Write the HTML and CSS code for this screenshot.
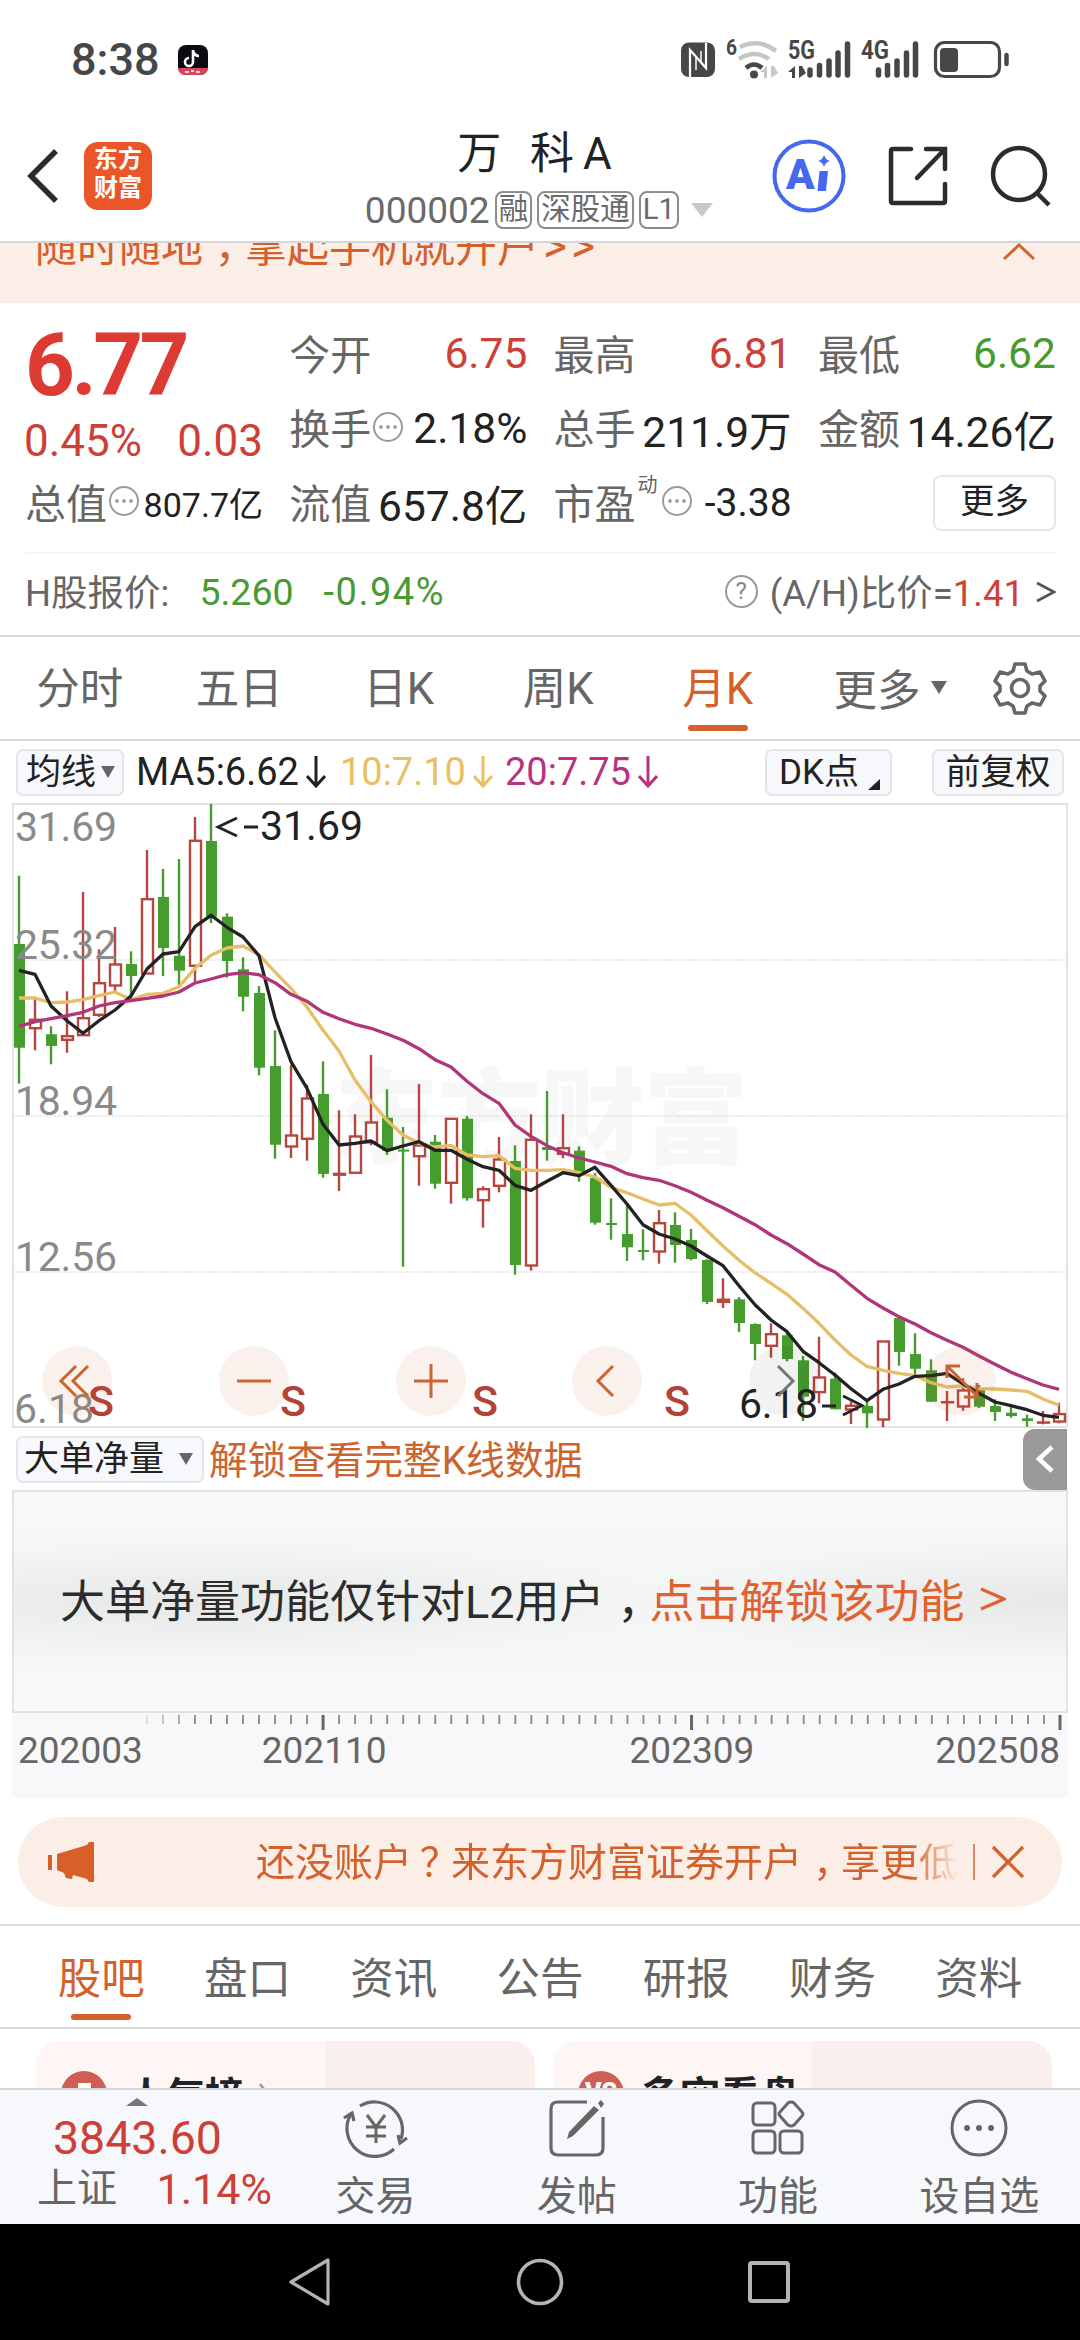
FILE: index.html
```html
<!DOCTYPE html>
<html lang="zh-CN">
<head>
    <meta charset="utf-8">
    <meta name="viewport" content="width=1080">
    <title>万科A 000002</title>
    <link rel="stylesheet" href="styles.css">
</head>
<body>
    <div class="statusbar">
        <span class="clock">8:38</span>
        <svg class="app-badge" width="32" height="32" viewBox="0 0 32 32">
            <rect x="1" y="1" width="30" height="30" rx="8" fill="#0b0b14"/>
            <path d="M1 24h30c0 4-3 7-8 7H9c-5 0-8-3-8-7z" fill="#d8455c"/>
            <path d="M16 6v12a4 4 0 1 1-4-4M16 7c1 3 3 5 6 5" fill="none" stroke="#fff" stroke-width="2.6"/>
            <path d="M8 28h4M14 27h3M19 28h4" stroke="#fbd9dc" stroke-width="2"/>
        </svg>
        <svg class="status-icons" width="332" height="42" viewBox="0 0 332 42">
            <rect x="4" y="3.500" width="34" height="34.500" rx="8" fill="#474747"/>
            <path d="M13 38V11l16 18V4" fill="none" stroke="#fff" stroke-width="2.200"/>
            <path d="M19 31V18M24 12v12" fill="none" stroke="#fff" stroke-width="1.500"/>
            <text x="49" y="16" class="net" font-size="22" textLength="11" lengthAdjust="spacingAndGlyphs">6</text>
            <g fill="none" stroke-width="4.500">
                <path d="M63 8q19-9 36 4" stroke="#c6c6c6"/>
                <path d="M62 20q16-10 30 0" stroke="#c6c6c6"/>
                <path d="M69 29q8-7 16 0" stroke="#474747"/>
            </g>
            <circle cx="77" cy="35.500" r="4" fill="#474747"/>
            <path d="M83 33l7-6v12h-3v-6zM94 39V27h3l4 7z" fill="#c6c6c6"/>
            <text x="111" y="20" class="net" font-size="26" textLength="27" lengthAdjust="spacingAndGlyphs">5G</text>
            <path d="M111 33l7-6v12h-3v-6zM122 39V27h3l4 7z" fill="#474747"/>
            <g stroke="#474747" stroke-width="5.500" stroke-linecap="round">
                <path d="M133 36v-5M142.500 36v-9.500M152 36V22M161 36V14M170.500 36V5"/>
                <path d="M201.500 36v-5M210.500 36v-9.500M220 36V22M229.500 36V14M238.500 36V5"/>
            </g>
            <text x="184" y="20" class="net" font-size="26" textLength="28" lengthAdjust="spacingAndGlyphs">4G</text>
            <rect x="258.500" y="3.500" width="64" height="34" rx="9" fill="none" stroke="#474747" stroke-width="3.200"/>
            <rect x="263" y="9" width="18" height="24" rx="4" fill="#474747"/>
            <path d="M329.500 16v9" stroke="#474747" stroke-width="4.500" stroke-linecap="round"/>
        </svg>
    </div>

    <div class="header">
        <div class="header-left">
            <svg width="34" height="56" viewBox="0 0 34 56"><path d="M30 3L5 28l25 25" fill="none" stroke="#2c2c2c" stroke-width="5.500"/></svg>
            <div class="logo">东方<br>财富</div>
        </div>
        <div class="header-title">
            <div class="name">万 科A</div>
            <div class="code">
                <span class="num">000002</span>
                <span class="tag">融</span>
                <span class="tag">深股通</span>
                <span class="tag">L1</span>
                <svg width="22" height="14" viewBox="0 0 22 14"><path d="M0 0h22L11 14z" fill="#c8c8c8"/></svg>
            </div>
        </div>
        <div class="header-right">
            <svg width="74" height="74" viewBox="0 0 74 74">
                <circle cx="37" cy="37" r="34.500" fill="none" stroke="#4468ee" stroke-width="4"/>
                <text x="14" y="50" class="ai">A</text>
                <path d="M47.500 32h8.500l-2 20h-8.500z" fill="#4468ee"/>
                <path d="M52 16q1.500 5 6 6-4.500 1-6 6-1.500-5-6-6 4.500-1 6-6z" fill="#4468ee"/>
            </svg>
            <svg width="60" height="60" viewBox="0 0 60 60">
                <path d="M23 3H5q-2 0-2 2v50q0 2 2 2h50q2 0 2-2V38M38 3h19v20M56 4L29 32" fill="none" stroke="#2c2c2c" stroke-width="4.500" stroke-linecap="round"/>
            </svg>
            <svg width="62" height="62" viewBox="0 0 62 62">
                <circle cx="29" cy="29" r="26" fill="none" stroke="#2c2c2c" stroke-width="4.500"/>
                <path d="M47 48l12 12" stroke="#2c2c2c" stroke-width="4.500"/>
            </svg>
        </div>
    </div>

    <div class="notice">
        <span class="notice-text">随时随地<i class="comma">，</i>拿起手机就开户<em>&gt;&gt;</em></span>
        <svg width="34" height="18" viewBox="0 0 34 18"><path d="M2 16L17 2l15 14" fill="none" stroke="#d4602c" stroke-width="3"/></svg>
    </div>

    <div class="quote">
        <div class="quote-grid">
            <div class="price">
                <div class="last">6.77</div>
                <div class="change"><span>0.45%</span><span>0.03</span></div>
            </div>
            <div class="cell"><span>今开</span><b class="up">6.75</b></div>
            <div class="cell"><span>最高</span><b class="up">6.81</b></div>
            <div class="cell"><span>最低</span><b class="down">6.62</b></div>
            <div class="cell"><span>换手</span><i class="dots"></i><b>2.18%</b></div>
            <div class="cell"><span>总手</span><b>211.9万</b></div>
            <div class="cell"><span>金额</span><b>14.26亿</b></div>
            <div class="cell"><span>总值</span><i class="dots"></i><b class="small">807.7亿</b></div>
            <div class="cell"><span>流值</span><b>657.8亿</b></div>
            <div class="cell"><span>市盈</span><sup>动</sup><i class="dots"></i><b class="mid">-3.38</b></div>
            <div class="cell"><button class="more">更多</button></div>
        </div>
        <div class="hshare">
            <span>H股报价:</span>
            <span class="down h-price">5.260</span>
            <span class="down h-rate">-0.94%</span>
            <span class="help">?</span>
            <span class="ratio">(A/H)比价=<em class="up">1.41</em></span>
            <svg width="20" height="22" viewBox="0 0 20 22"><path d="M1 2l17 9-17 9" fill="none" stroke="#555" stroke-width="2.600"/></svg>
        </div>
    </div>

    <div class="periods">
        <div class="period">分时</div>
        <div class="period">五日</div>
        <div class="period">日K</div>
        <div class="period">周K</div>
        <div class="period active">月K</div>
        <div class="period-more">更多<svg width="16" height="13" viewBox="0 0 16 13"><path d="M0 0h16L8 13z" fill="#666"/></svg></div>
        <svg class="gear" width="54" height="54" viewBox="0 0 54 54">
            <path d="M22 3h10l2 7 5 3 8-2 5 9-5 5v5l5 5-5 9-8-2-5 3-2 7H22l-2-7-5-3-8 2-5-9 5-5v-5l-5-5 5-9 8 2 5-3z" fill="none" stroke="#666" stroke-width="3.600" stroke-linejoin="round"/>
            <circle cx="27" cy="27" r="8.500" fill="none" stroke="#666" stroke-width="3.600"/>
        </svg>
    </div>

    <div class="indicators">
        <div class="chip chip-ma">均线<svg width="14" height="12" viewBox="0 0 14 12"><path d="M0 0h14L7 12z" fill="#666"/></svg></div>
        <span class="ma ma5">MA5:6.62<svg width="20" height="32" viewBox="0 0 20 32"><path d="M10 0v30M1 20l9 10 9-10" fill="none" stroke="currentColor" stroke-width="3"/></svg></span>
        <span class="ma ma10">10:7.10<svg width="20" height="32" viewBox="0 0 20 32"><path d="M10 0v30M1 20l9 10 9-10" fill="none" stroke="currentColor" stroke-width="3"/></svg></span>
        <span class="ma ma20">20:7.75<svg width="20" height="32" viewBox="0 0 20 32"><path d="M10 0v30M1 20l9 10 9-10" fill="none" stroke="currentColor" stroke-width="3"/></svg></span>
        <div class="chip chip-dk">DK点<svg width="12" height="11" viewBox="0 0 12 11"><path d="M12 0v11H0z" fill="#222"/></svg></div>
        <div class="chip chip-fq">前复权</div>
    </div>

    <div class="chart">
        <svg id="kline" width="1056" height="625" viewBox="12 803 1056 625">
            <text class="watermark" x="334" y="1156" textLength="414">东方财富</text>
            <path class="grid" d="M13 960H1067M13 1116H1067M13 1272H1067"/>
            <path class="frame" d="M13 804H1067V1427H13z"/>
            <g id="candles"></g>
            <g id="averages"></g>
            <g class="scale">
                <text x="15" y="841" textLength="102">31.69</text>
                <text x="15" y="959" textLength="102">25.32</text>
                <text x="15" y="1115" textLength="102">18.94</text>
                <text x="15" y="1271" textLength="102">12.56</text>
                <text x="14" y="1423" textLength="80">6.18</text>
            </g>
            <g class="mark">
                <text x="260" y="840" textLength="103">31.69</text>
                <path d="M237 818l-19 9 19 9M244 827h14"/>
                <text x="739" y="1418" textLength="79">6.18</text>
                <path d="M822 1406h14M843 1396l19 9.500-19 9.500"/>
            </g>
            <g class="sell">
                <text x="88" y="1416">S</text>
                <text x="280" y="1416">S</text>
                <text x="472" y="1416">S</text>
                <text x="664" y="1416">S</text>
            </g>
        </svg>
        <div class="tools">
            <div class="tool"><svg viewBox="0 0 70 70"><path d="M34 20L19 35l15 15M46 20L31 35l15 15"/></svg></div>
            <div class="tool"><svg viewBox="0 0 70 70"><path d="M18 35h34"/></svg></div>
            <div class="tool"><svg viewBox="0 0 70 70"><path d="M18 35h34M35 18v34"/></svg></div>
            <div class="tool"><svg viewBox="0 0 70 70"><path d="M41 20L26 35l15 15"/></svg></div>
            <div class="tool off"><svg viewBox="0 0 70 70"><path d="M29 20l15 15-15 15"/></svg></div>
            <div class="tool"><svg viewBox="0 0 70 70"><path d="M21 32V20h13M21 20l30 30M51 37v14H38"/></svg></div>
        </div>
    </div>

    <div class="subbar">
        <div class="chip chip-sub">大单净量<svg width="14" height="12" viewBox="0 0 14 12"><path d="M0 0h14L7 12z" fill="#666"/></svg></div>
        <span class="unlock">解锁查看完整K线数据</span>
        <div class="drawer"><svg width="20" height="30" viewBox="0 0 20 30"><path d="M17 3L4 15l13 12" fill="none" stroke="#fff" stroke-width="4.500"/></svg></div>
    </div>
    <div class="locked">大单净量功能仅针对L2用户<i class="comma">，</i><span>点击解锁该功能 <svg width="26" height="26" viewBox="0 0 26 26"><path d="M1 3l23 10L1 23" fill="none" stroke="#e0622f" stroke-width="3.200"/></svg></span></div>
    <div class="axis">
        <svg id="ticks" width="1056" height="16" viewBox="12 0 1056 16"></svg>
        <div class="dates">
            <span>202003</span><span>202110</span><span>202309</span><span>202508</span>
        </div>
    </div>

    <div class="promo">
        <svg width="46" height="40" viewBox="0 0 46 40"><path d="M0 13h4v15H0zM9 12L39 3l2-3h5v40h-5l-2-3-14-4-1 4-6-1-2-5-7-3z" fill="#d95f28"/></svg>
        <div class="promo-text">还没账户<i class="question">？</i>来东方财富证券开户<i class="comma">，</i>享更低</div>
        <i class="bar"></i>
        <svg width="34" height="34" viewBox="0 0 34 34"><path d="M2 2l30 30M32 2L2 32" stroke="#d4602c" stroke-width="3.200"/></svg>
    </div>

    <div class="sections">
        <div class="section active">股吧</div>
        <div class="section">盘口</div>
        <div class="section">资讯</div>
        <div class="section">公告</div>
        <div class="section">研报</div>
        <div class="section">财务</div>
        <div class="section">资料</div>
    </div>

    <div class="cards">
        <div class="card card-rank">
            <svg width="46" height="46" viewBox="0 0 46 46"><circle cx="23" cy="23" r="23" fill="#cf5f55"/><path d="M17 12h13v20H17z" fill="#fff"/></svg>
            <span>人气榜</span>
            <svg class="go" width="12" height="24" viewBox="0 0 12 24"><path d="M2 2l8 10-8 10" fill="none" stroke="#999" stroke-width="2.500"/></svg>
        </div>
        <div class="card card-vs">
            <svg width="46" height="46" viewBox="0 0 46 46"><circle cx="23" cy="23" r="23" fill="#cf5f55"/><text x="7" y="30" class="vs">VS</text></svg>
            <span>多空看盘</span>
        </div>
    </div>

    <div class="tabbar">
        <div class="index">
            <svg width="22" height="8" viewBox="0 0 22 8"><path d="M0 8L11 0l11 8z" fill="#777"/></svg>
            <div class="index-value">3843.60</div>
            <div class="index-line"><span>上证</span><em>1.14%</em></div>
        </div>
        <div class="tab">
            <svg width="66" height="60" viewBox="0 0 66 60">
                <g fill="none" stroke="#666" stroke-width="3.200">
                    <path d="M17 8a28 28 0 0 1 41 33M51 51A28 28 0 0 1 8 16"/>
                    <path d="M1 20l8-5 2 8M64 40l-7 5-2-8"/>
                    <path d="M24 17l9 12 9-12M33 29v16M23 29h20M23 38h20" stroke-width="3"/>
                </g>
            </svg>
            <span>交易</span>
        </div>
        <div class="tab">
            <svg width="56" height="60" viewBox="0 0 56 60">
                <path d="M38 4H9q-7 0-7 7v39q0 7 7 7h38q7 0 7-7V19" fill="none" stroke="#666" stroke-width="3.200"/>
                <path d="M45 8l5 4-26 26-6 3 2-7z" fill="#666"/><path d="M49 5l3-3 3 4-3 4z" fill="#666"/>
            </svg>
            <span>发帖</span>
        </div>
        <div class="tab">
            <svg width="54" height="60" viewBox="0 0 54 60">
                <g fill="none" stroke="#666" stroke-width="3">
                    <rect x="2" y="5" width="22" height="22" rx="4"/>
                    <rect x="2" y="33" width="22" height="22" rx="4"/>
                    <rect x="29" y="33" width="22" height="22" rx="4"/>
                    <path d="M40 4q2 0 3 1l8 9q2 2 0 4l-8 9q-3 2-6 0l-8-9q-2-2 0-4l8-9q1-1 3-1z"/>
                </g>
            </svg>
            <span>功能</span>
        </div>
        <div class="tab">
            <svg width="60" height="60" viewBox="0 0 60 60">
                <circle cx="30" cy="30" r="27" fill="none" stroke="#666" stroke-width="3"/>
                <g fill="#666"><circle cx="18" cy="30" r="3"/><circle cx="30" cy="30" r="3"/><circle cx="42" cy="30" r="3"/></g>
            </svg>
            <span>设自选</span>
        </div>
    </div>

    <div class="sysnav">
        <svg width="48" height="50" viewBox="0 0 48 50"><path d="M41 3v44L4 25z" fill="none" stroke="#b4b4b4" stroke-width="3.200" stroke-linejoin="round"/></svg>
        <svg width="48" height="50" viewBox="0 0 48 50"><circle cx="24" cy="25" r="21.500" fill="none" stroke="#b4b4b4" stroke-width="3.600"/></svg>
        <svg width="48" height="50" viewBox="0 0 48 50"><rect x="5" y="6" width="38" height="38" rx="2" fill="none" stroke="#b4b4b4" stroke-width="4"/></svg>
    </div>

    <script type="text/javascript" src="kline.js"></script>
</body>
</html>
```
FILE: styles.css
```css
*{box-sizing: border-box;}
body{width: 1080px;height: 2340px;margin: 0;background-color: #fff;font-family: Roboto, "Noto Sans CJK SC", sans-serif;color: #222;overflow: hidden;}
i, em{font-style: normal;}
b{font-weight: 400;}
svg{display: block;flex: none;}
.comma, .question{display: inline-block;width: 1em;text-indent: 0.28em;white-space: nowrap;}
.question{text-indent: 0.2em;}
.up{color: #cc4038;}
.down{color: #489a32;}

.statusbar{height: 110px;padding: 10px 71px 0 71px;display: flex;align-items: center;}
.clock{font-size: 45px;font-weight: 500;color: #474747;line-height: 50px;}
.app-badge{margin-left: 17px;}
.status-icons{margin-left: auto;overflow: visible;}
.net{font-weight: 700;fill: #474747;}

.header{height: 133px;padding: 0 28px 0 26px;display: grid;grid-template-columns: 1fr auto 1fr;border-bottom: 2px solid #d5d5da;}
.header-left{display: flex;align-items: center;gap: 24px;}
.logo{width: 68px;height: 68px;border-radius: 14px;background-color: #ea5628;color: #fff;font-size: 24px;font-weight: 700;line-height: 29px;text-align: center;padding-top: 3px;}
.header-title{display: flex;flex-direction: column;align-items: center;padding-top: 16px;}
.name{font-size: 44px;line-height: 56px;letter-spacing: 9px;height: 56px;}
.code{display: flex;align-items: center;gap: 5px;height: 56px;color: #6a6a6a;font-size: 37px;}
.code svg{margin-left: 7px;}
.tag{height: 38px;border: 2px solid #8c8c8c;border-radius: 8px;padding: 0 2px;font-size: 29.500px;line-height: 33px;}
.header-right{display: flex;align-items: center;justify-content: flex-end;gap: 42px;}
.ai{font-size: 42px;font-weight: 900;fill: #4468ee;}

.notice{height: 60px;background-color: #fbeee6;overflow: hidden;display: flex;justify-content: space-between;padding: 0 44px 0 35px;color: #d4602c;}
.notice-text{font-size: 42px;line-height: 60px;margin-top: -25px;}
.notice-text em{letter-spacing: 4px;font-size: 46px;line-height: 40px;margin-left: 4px;}

.quote{height: 334px;padding: 15px 24px 0 25px;border-bottom: 2px solid #dadada;}
.quote-grid{display: grid;grid-template-columns: repeat(4, 238px);grid-template-rows: repeat(3, 74.5px);column-gap: 26.300px;}
.price{grid-row: 1 / 3;color: #dc3a32;}
.last{font-size: 87px;font-weight: 700;line-height: 94px;letter-spacing: -3.500px;}
.change{display: flex;justify-content: space-between;font-size: 44px;line-height: 58px;color: #cc4038;margin-left: -1px;}
.cell{display: flex;align-items: center;white-space: nowrap;font-size: 41px;color: #666;padding-bottom: 3px;}
.cell > span{margin-top: -4px;}
.cell b{margin-left: auto;font-size: 42.500px;color: #222;}
.cell b.up{color: #cc4038;}
.cell b.down{color: #489a32;}
.cell b.small{font-size: 34px;}
.cell b.mid{font-size: 39px;}
.cell sup{font-size: 20px;line-height: 20px;align-self: flex-start;margin: 8px 2px 0 2px;}
.dots{width: 30px;height: 30px;margin: -3px 0 0 2px;border: 2px solid #999;border-radius: 50%;background: radial-gradient(circle, #999 1.500px, transparent 2.200px) center / 7px 30px;background-clip: content-box;padding: 0 3px;}
.more{margin-left: auto;width: 123px;height: 56px;border: 2px solid #e6e6e6;border-radius: 8px;background-color: #fff;font-family: inherit;font-size: 34.500px;line-height: 48px;color: #222;padding: 0 0 3px 0;}
.hshare{height: 80px;margin-top: 10px;border-top: 2px solid #f5f5f5;display: flex;align-items: center;font-size: 36.500px;color: #666;padding-bottom: 2px;}
.hshare > span:first-child{margin-top: -3px;}
.h-price{margin-left: 30px;font-size: 37.500px;}
.h-rate{margin-left: 30px;font-size: 38px;letter-spacing: 1.500px;}
.help{margin-left: auto;width: 33px;height: 33px;border: 2px solid #999;border-radius: 50%;font-size: 24px;line-height: 29px;text-align: center;color: #888;}
.ratio{margin: -3px 12px 0 12px;}

.periods{height: 104px;display: flex;align-items: center;border-bottom: 2px solid #dadada;font-size: 43.500px;color: #666;}
.period{width: 159.500px;height: 102px;line-height: 106px;text-align: center;}
.active{color: #d4602c;}
.active::after{content: "";display: block;width: 60px;height: 6px;margin: -18px auto 0 auto;border-radius: 3px;background-color: #d4602c;}
.period-more{display: flex;align-items: center;margin: -1px 0 0 36px;}
.period-more svg{margin-left: 10px;}
.gear{margin-left: 46px;}

.indicators{height: 62px;display: flex;align-items: center;padding: 0 16px 0 16px;}
.chip{height: 47px;display: flex;align-items: center;border: 2px solid #e4e5ea;border-radius: 7px;background-color: #f7f8fb;font-size: 35px;line-height: 43px;}
.chip-ma{width: 108px;padding-left: 8px;}
.chip-ma svg{margin-left: 5px;}
.ma{display: flex;align-items: center;font-size: 38px;}
.ma svg{margin-left: 7px;}
.ma5{margin-left: 12px;}
.ma10{margin-left: 14px;color: #eabf62;}
.ma20{margin-left: 12px;color: #b93280;}
.chip-dk{width: 127px;margin-left: auto;padding-left: 12px;}
.chip-dk svg{margin: 25px 0 0 9px;}
.chip-fq{width: 132px;margin-left: 40px;justify-content: center;}

/* candles are drawn by kline.js, the round buttons lie over them */
.chart{position: relative;height: 625px;padding-left: 12px;}
.frame{fill: none;stroke: #e2e2e2;stroke-width: 2;}
.grid{stroke: #e4e4e4;stroke-width: 1.500;stroke-dasharray: 2 1;}
.watermark{font-family: "Noto Sans CJK SC", sans-serif;font-size: 104px;font-weight: 900;fill: #f7f7f7;}
.rise{fill: #fff;stroke: #b5473f;stroke-width: 2.400;}
.fall{fill: #479c2e;}
.wick-rise{stroke: #b5473f;stroke-width: 2.400;}
.wick-fall{stroke: #479c2e;stroke-width: 2.400;}
.line{fill: none;stroke-width: 3.300;stroke-linejoin: round;}
.scale text{font-size: 41px;fill: #8a8a8a;}
.mark text{font-size: 41px;fill: #222;}
.mark path{fill: none;stroke: #222;stroke-width: 2.800;}
.sell text{font-size: 43px;font-weight: 500;fill: #b5403a;}
.tools{position: absolute;left: 42px;bottom: 12px;width: 954px;display: flex;justify-content: space-between;}
.tool{width: 70px;height: 70px;border-radius: 50%;background-color: rgba(212, 96, 44, 0.090);}
.tool path{fill: none;stroke: #ca6430;stroke-width: 3;}
.off{background-color: rgba(0, 0, 0, 0.050);}
.off path{stroke: #777;}

.subbar{height: 62px;display: flex;align-items: center;padding: 0 13px 0 16px;}
.chip-sub{width: 188px;padding-left: 6px;}
.chip-sub svg{margin-left: 15px;}
.unlock{margin: -4px 0 0 5px;font-size: 38.800px;color: #cc6430;}
.drawer{width: 44px;height: 61px;margin-left: auto;border-radius: 12px 0 0 12px;background-color: #999;display: flex;align-items: center;justify-content: center;}
.locked{height: 223px;margin: 0 12px;border: 2px solid #e2e2e2;padding: 0 0 6px 46px;display: flex;align-items: center;white-space: pre;font-size: 45px;color: #2c2c2c;
    background: radial-gradient(ellipse 480px 66px at 18% 50%, rgba(0, 0, 0, 0.055), transparent), radial-gradient(ellipse 430px 66px at 100% 50%, rgba(0, 0, 0, 0.055), transparent), linear-gradient(#f8f9f9, #f4f5f5 50%, #f8f9f9);}
.locked span{display: flex;align-items: center;color: #e0622f;}
.locked span svg{margin-left: 4px;}
.axis{height: 85px;margin: 0 12px;background-color: #f8f8fb;padding-top: 2px;}
.dates{display: flex;padding: 0 8px 0 6px;font-size: 37px;line-height: 39px;color: #666;}
.dates span:nth-child(2){margin-left: 119px;}
.dates span:nth-child(3){margin-left: 243px;}
.dates span:nth-child(4){margin-left: auto;}

.promo{height: 90px;margin: 19px 18px 17px 18px;border-radius: 45px;background-color: #fbeee6;display: flex;align-items: center;padding: 0 37px 0 30px;color: #d4602c;}
.promo-text{width: 704px;margin: -6px 0 0 162px;font-size: 39px;white-space: nowrap;overflow: hidden;-webkit-mask-image: linear-gradient(90deg, #000 655px, transparent 702px);mask-image: linear-gradient(90deg, #000 655px, transparent 702px);}
.bar{width: 2px;height: 36px;margin: 0 16px 0 14px;background-color: #d98a66;}

.sections{height: 105px;border-top: 2px solid #dadada;border-bottom: 2px solid #dadada;display: flex;padding: 0 28px;font-size: 43.500px;color: #666;}
.section{width: 146.300px;height: 101px;line-height: 107px;text-align: center;}
.section.active::after{margin-top: -19px;}

.cards{height: 59px;overflow: hidden;display: flex;gap: 18px;padding: 12px 28px 0 36px;}
.card{width: 499px;height: 140px;border-radius: 24px;padding: 30px 0 0 25px;display: flex;align-items: flex-start;background: linear-gradient(90deg, #fdf6f4 58%, #fbefed 58%);}
.card-vs{background: linear-gradient(90deg, #fdf6f4 52%, #fbefed 52%);}
.card span{margin: 0 0 0 20px;font-size: 39px;line-height: 52px;font-weight: 700;}
.card-vs span{margin-left: 16px;font-size: 40px;}
.card .go{margin: 11px 0 0 14px;}
.vs{font-size: 25px;font-weight: 900;fill: #fff;}

.tabbar{height: 136px;display: flex;background-color: #f7f8fb;border-top: 2px solid #d8d9dd;}
.index{width: 275px;padding: 8px 0 0 0;display: flex;flex-direction: column;align-items: center;}
.index-value{font-size: 46.500px;line-height: 54px;margin-top: 5px;color: #cc4038;}
.index-line{align-self: stretch;display: flex;justify-content: space-between;padding: 0 3px 0 37px;font-size: 40px;line-height: 48px;color: #666;}
.index-line em{font-size: 43px;color: #cc4038;}
.tab{width: 201.300px;padding-top: 8px;display: flex;flex-direction: column;align-items: center;font-size: 40px;line-height: 52px;color: #666;}
.tab span{margin-top: 13px;}

.sysnav{height: 116px;background-color: #000;display: flex;align-items: center;justify-content: center;gap: 181px;}
```
FILE: kline.js
```javascript
var NS = 'http://www.w3.org/2000/svg';
var START = 19, STEP = 16;

// one month each: up (1) or down (0), body top, body bottom, high, low
var candles = [
    [0,944,1047.7,875.7,1083.7],[1,1019.3,1028.7,996.7,1050.3],[0,1034.3,1046,1026.3,1064.3],[1,1035.7,1040.3,991.3,1052.7],
    [1,1017.7,1035.7,892,1035.7],[1,982.7,1015.3,949.3,1017],[1,964,986,927,991.7],[0,964,976,951.3,1000],
    [1,898.7,974,850,974],[0,897,948,869,976],[0,955.7,970.7,859,985.3],[1,840.3,966.3,817,981.7],
    [0,841,916.7,804,923],[0,916.7,961,913.3,977.7],[0,969.3,996.7,957.3,1011.3],[0,993,1067.7,986,1075.3],
    [0,1066,1144.7,1030.3,1158.7],[1,1135,1147,1064.7,1158],[1,1098,1139.3,1084.7,1160.7],[0,1094,1174,1061.3,1177.7],
    [1,1173.4,1175.2,1110.3,1191],[1,1136,1173.3,1114.3,1173.3],[1,1122,1142.7,1055,1145.3],[0,1117.7,1150.7,1089.3,1155],
    [0,1149.6,1151.6,1127,1266.7],[1,1145,1156.7,1084,1185.7],[0,1141.7,1183.7,1135,1188.7],[1,1118.3,1183.3,1118,1203.7],
    [0,1118.7,1198.3,1116,1200.7],[1,1188.7,1200.7,1186.3,1227.7],[1,1159,1186.3,1137,1192.3],[0,1161,1265,1145.3,1274.7],
    [1,1139.3,1266,1114.3,1270.7],[0,1147,1150,1091,1160.7],[1,1147.7,1154.3,1114.3,1158.3],[0,1150.7,1173,1146.3,1181.7],
    [0,1178,1222.7,1173,1224.7],[0,1223,1225,1198.3,1239.7],[0,1234,1247.3,1205,1261],[0,1250,1252,1229.3,1260.3],
    [1,1222.7,1252,1210,1263.7],[0,1225,1245,1212.3,1262.7],[0,1240,1259,1229,1260.3],[0,1260,1302,1259.3,1304],
    [1,1299.3,1302.3,1278.3,1308],[0,1299.3,1323,1297,1332],[0,1324,1344,1323.3,1360.3],[1,1333.7,1346.3,1323.3,1357.7],
    [0,1335.3,1359,1330,1361.3],[0,1360.3,1396.7,1356,1421],[1,1377,1392.6,1336.7,1403.3],[0,1378.7,1409.3,1372.7,1409.3],
    [1,1405.3,1410,1401.7,1424],[0,1406,1413.3,1401.7,1428],[1,1341,1420,1341,1427.3],[0,1318,1352,1316.7,1365.7],
    [0,1354,1368.7,1333.3,1376.7],[0,1370.3,1401.7,1359.3,1401.7],[1,1401.7,1401.8,1391,1421],[1,1390,1407,1378.3,1410.7],
    [0,1390,1406.7,1385,1408],[0,1406,1412,1399.3,1421],[0,1412.7,1416,1406.7,1417.7],[0,1418.3,1421,1414.7,1426.7],
    [1,1422,1422.1,1411,1424.3],[1,1413.6,1422,1402.7,1423.3]
];

var averages = {
    '#e8bd68': [998,998,1002.7,1002,999.7,995.7,992,999.7,994.3,993.3,986.7,968.3,955.3,948,946,954.7,972,988.3,1007.3,1030,1051,1080,1101.7,1120.3,1135,1143.3,1147,1145.3,1155,1156.7,1155.7,1168.3,1170.3,1170.3,1169.7,1172.7,1177,1187.3,1192.7,1199,1205,1203.3,1215,1230.7,1246,1260.3,1272.7,1283.3,1294.3,1308.3,1323.3,1340,1355,1366.3,1370.3,1373.3,1375.7,1382.7,1387,1386,1388.7,1389,1390,1391.3,1399,1405.3],
    '#222': [970.3,974.3,1006,1020.7,1033.3,1020.7,1010,996,969,954,951.7,926.7,915.3,927.3,937,955.7,1017.7,1061.7,1088.3,1124.3,1145,1143.3,1141,1150.7,1146,1141.7,1150.3,1150.3,1159.3,1166.7,1170.3,1185.3,1190.3,1181.3,1172.7,1175.7,1167.3,1185.3,1204,1224.7,1234,1239,1246,1256,1265.7,1285.7,1304.7,1320,1331.7,1351.3,1362.7,1375,1388.7,1400.7,1389.3,1384,1376.3,1375.7,1373.3,1384,1393.3,1402,1405.7,1409.7,1415.3,1417.3],
    '#b03579': [1026.3,1021.7,1018.7,1015.7,1012.3,1006,1002.7,1000.7,998.3,996,992,983,979,974.7,972.7,974.7,982.7,994.3,1001.3,1012.3,1018.7,1024.3,1028.3,1034,1040.3,1048.7,1059.7,1067,1081.3,1093.7,1103.3,1125,1136.3,1145.7,1152.7,1158,1162,1166.3,1173.7,1177.7,1180.3,1185.7,1192.3,1200.3,1207.7,1216.3,1224.7,1235,1243.7,1254,1264.7,1272,1285.3,1298.3,1308,1316.7,1324,1332.7,1340.3,1347.3,1356,1364.3,1372.3,1378.7,1385,1389.3]
};

function add(parent, name, attrs) {
    var elem = document.createElementNS(NS, name);
    for (var key in attrs) {
        elem.setAttribute(key, attrs[key]);
    }
    parent.appendChild(elem);
    return elem;
}

var group = document.getElementById('candles');
candles.forEach(function (c, i) {
    var x = START + i * STEP;
    add(group, 'path', {'class': c[0] ? 'wick-rise' : 'wick-fall', d: 'M' + x + ' ' + c[3] + 'V' + c[4]});
    if (c[0]) {
        add(group, 'rect', {'class': 'rise', x: x - 5, y: c[1] + 0.5, width: 11, height: Math.max(c[2] - c[1] - 1, 0.1)});
    } else {
        add(group, 'rect', {'class': 'fall', x: x - 5, y: c[1], width: 11, height: c[2] - c[1]});
    }
});

var lines = document.getElementById('averages');
for (var color in averages) {
    add(lines, 'polyline', {
        'class': 'line',
        stroke: color,
        points: averages[color].map(function (y, i) { return (START + i * STEP) + ',' + y; }).join(' ')
    });
}

var ticks = document.getElementById('ticks');
for (var k = 0; k < 58; k++) {
    var major = k === 0 || k === 23 || k === 46;
    add(ticks, 'path', {
        d: 'M' + (1060 - k * 16.02) + ' 0v' + (major ? 15 : 9),
        stroke: major ? '#666' : '#888',
        'stroke-width': major ? 3 : 1.8,
        opacity: k > 54 ? (58 - k) * 0.25 : 1
    });
}
```
